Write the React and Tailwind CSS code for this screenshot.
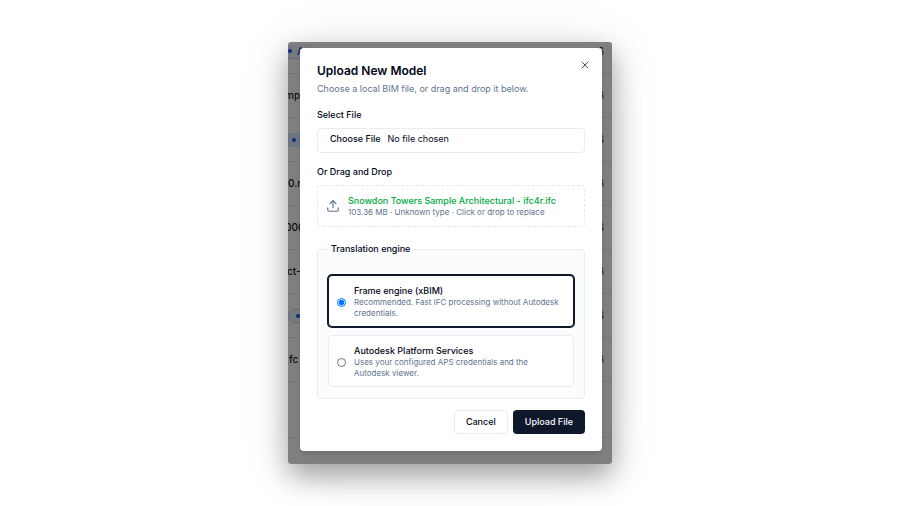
import { useState } from "react";
import { Upload, X } from "lucide-react";

const modelRows = [
  { name: "A", count: 6, badge: "outline" },
  { name: "mpl", count: 6, offset: "-ml-[3px]" },
  { name: "", count: 6, badge: "dot" },
  { name: "0.r", count: 6, offset: "ml-0" },
  { name: "000", count: 6, offset: "-ml-[3px]" },
  { name: "ct-", count: 6, offset: "-ml-px" },
  { name: "", count: 6, badge: "pill" },
  { name: "fc", count: 6, offset: "ml-px" },
];

const badgeStyles = {
  outline: "flex h-[14px] w-8 items-center gap-[5px] rounded-r-full border-b border-blue-200 bg-blue-50 font-medium text-blue-700",
  dot: "flex h-[14px] w-16 items-center bg-blue-100 pl-1",
  pill: "flex h-[14px] w-16 items-center rounded-full border border-blue-200 bg-blue-50 pl-[7px]",
};

const engines = [
  {
    value: "xbim",
    title: "Frame engine (xBIM)",
    description: "Recommended. Fast IFC processing without Autodesk credentials.",
  },
  {
    value: "aps",
    title: "Autodesk Platform Services",
    description: "Uses your configured APS credentials and the Autodesk viewer.",
  },
];

function ModelList() {
  return (
    <div className="absolute inset-0 bg-white" aria-hidden="true">
      <div className="-mt-3">
        {modelRows.map((row, index) => (
          <div key={index} className="flex h-11 items-center justify-between border-b border-slate-200 pr-2 text-[10px] text-slate-900">
            {row.badge ? (
              <span className={badgeStyles[row.badge]}>
                <span className="size-1 rounded-full bg-blue-600" />
                {row.name}
              </span>
            ) : (
              <span className={`font-medium ${row.offset}`}>{row.name}</span>
            )}
            <span>{row.count}</span>
          </div>
        ))}
        <div className="h-14 border-b border-slate-200" />
      </div>
      <div className="absolute inset-0 bg-black/50" />
    </div>
  );
}

function EngineOption({ engine, checked, onChange }) {
  return (
    <label
      className={`flex min-h-[52px] items-center gap-2 rounded border bg-white px-2 pt-[9px] pb-[7px] ${
        checked ? "border-slate-900 ring-1 ring-slate-900" : "border-[#e8edf3]"
      }`}
    >
      <input
        type="radio"
        name="engine"
        className="size-[9px] shrink-0"
        value={engine.value}
        checked={checked}
        onChange={() => onChange(engine.value)}
      />
      <span className="block">
        <span className="block text-[9px] leading-[12px] font-medium text-slate-950">{engine.title}</span>
        <span className="block text-[8px] leading-[11px] text-slate-500">{engine.description}</span>
      </span>
    </label>
  );
}

function UploadDialog() {
  const [engine, setEngine] = useState("xbim");

  return (
    <div
      role="dialog"
      aria-labelledby="dialog-title"
      className="relative mt-[6px] mr-[10px] mb-[13px] ml-3 rounded bg-white p-[17px] shadow-md"
    >
      <button type="button" aria-label="Close" className="absolute top-[11px] right-[11px] text-slate-600">
        <X className="size-3" />
      </button>

      <h2 id="dialog-title" className="text-[12px] leading-[12px] font-semibold text-slate-950">
        Upload New Model
      </h2>
      <p className="mt-[5px] text-[9px] leading-[14px] text-slate-500">
        Choose a local BIM file, or drag and drop it below.
      </p>

      <label htmlFor="model-file" className="mt-[13px] block text-[9px] leading-[12px] font-medium text-slate-950">
        Select File
      </label>
      <input
        id="model-file"
        type="file"
        className="mt-[7px] block h-[25px] w-full rounded border border-[#e8edf3] bg-white px-3 py-[3px] text-[9px] leading-[14px] text-slate-950 file:mr-[7px] file:font-medium"
      />

      <p className="mt-[13px] text-[9px] leading-[12px] font-medium text-slate-950">Or Drag and Drop</p>
      <button
        type="button"
        className="mt-[7px] flex h-[42px] w-full items-center gap-2 rounded border border-dashed border-slate-200 px-2 text-left"
      >
        <Upload className="size-[14px] shrink-0 text-slate-500" />
        <span className="block">
          <span className="block text-[9px] leading-[12px] font-medium text-green-600">
            Snowdon Towers Sample Architectural - ifc4r.ifc
          </span>
          <span className="block text-[8px] leading-[11px] text-slate-500">
            103.36 MB · Unknown type · Click or drop to replace
          </span>
        </span>
      </button>

      <fieldset className="mt-[15px] rounded border border-[#e8edf3] bg-slate-50/60 px-[10px] pb-[11px]">
        <legend className="px-[3px] text-[9px] leading-[14px] font-medium text-slate-950">Translation engine</legend>
        <div className="flex flex-col gap-2 pt-[19px]">
          {engines.map((item) => (
            <EngineOption key={item.value} engine={item} checked={engine === item.value} onChange={setEngine} />
          ))}
        </div>
      </fieldset>

      <div className="mt-[11px] flex justify-end gap-[5px]">
        <button
          type="button"
          className="h-6 rounded border border-[#e8edf3] bg-white px-[11px] text-[9px] font-medium text-slate-950"
        >
          Cancel
        </button>
        <button type="button" className="h-6 rounded bg-slate-900 px-3 text-[9px] font-medium text-slate-50">
          Upload File
        </button>
      </div>
    </div>
  );
}

function App() {
  return (
    <main className="flex min-h-screen items-center justify-center bg-white font-['Inter',sans-serif]">
      <div className="w-full max-w-[324px] rounded shadow-[0_12px_28px_rgba(0,0,0,0.35),0_4px_60px_rgba(0,0,0,0.08)]">
        <div className="relative overflow-hidden rounded-[3px]">
          <ModelList />
          <UploadDialog />
        </div>
      </div>
    </main>
  );
}

export default App;
